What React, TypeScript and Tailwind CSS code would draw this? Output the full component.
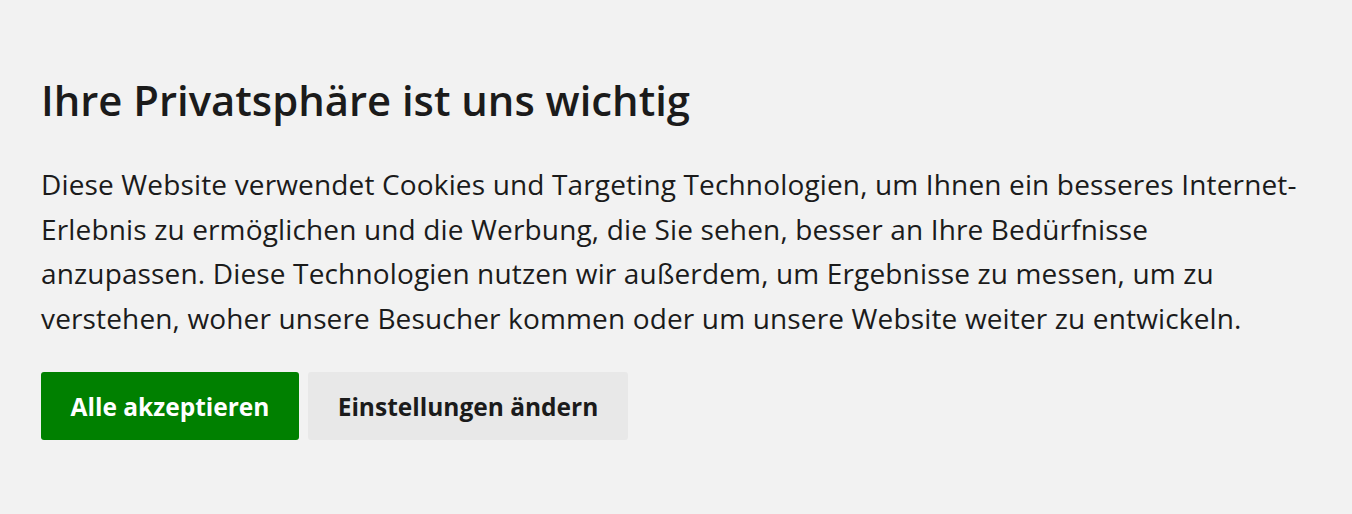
export default function App() {
  return (
    <div className="min-h-[514px] w-full bg-[#f2f2f2] px-[41px] pt-[75px] text-[#1b1b1b]" style={{ fontFamily: '"Open Sans", "Noto Sans", sans-serif' }}>
      <h1 className="m-0 text-[41.8px] font-semibold leading-[50px]">Ihre Privatsphäre ist uns wichtig</h1>
      <p className="mt-[37px] whitespace-nowrap text-[28px] leading-[44.7px] tracking-[0.15px]">
        Diese Website verwendet Cookies und Targeting Technologien, um Ihnen ein besseres Internet-<br />
        Erlebnis zu ermöglichen und die Werbung, die Sie sehen, besser an Ihre Bedürfnisse<br />
        anzupassen. Diese Technologien nutzen wir außerdem, um Ergebnisse zu messen, um zu<br />
        verstehen, woher unsere Besucher kommen oder um unsere Website weiter zu entwickeln.
      </p>
      <div className="mt-[31px] flex gap-[9px]">
        <button className="h-[68px] w-[258px] rounded-[3px] bg-[#008000] pt-[4px] text-[24.5px] font-bold text-white">Alle akzeptieren</button>
        <button className="h-[68px] w-[320px] rounded-[3px] bg-[#e8e8e8] pt-[4px] text-[24.5px] font-bold text-[#1b1b1b]">Einstellungen ändern</button>
      </div>
    </div>
  );
}
